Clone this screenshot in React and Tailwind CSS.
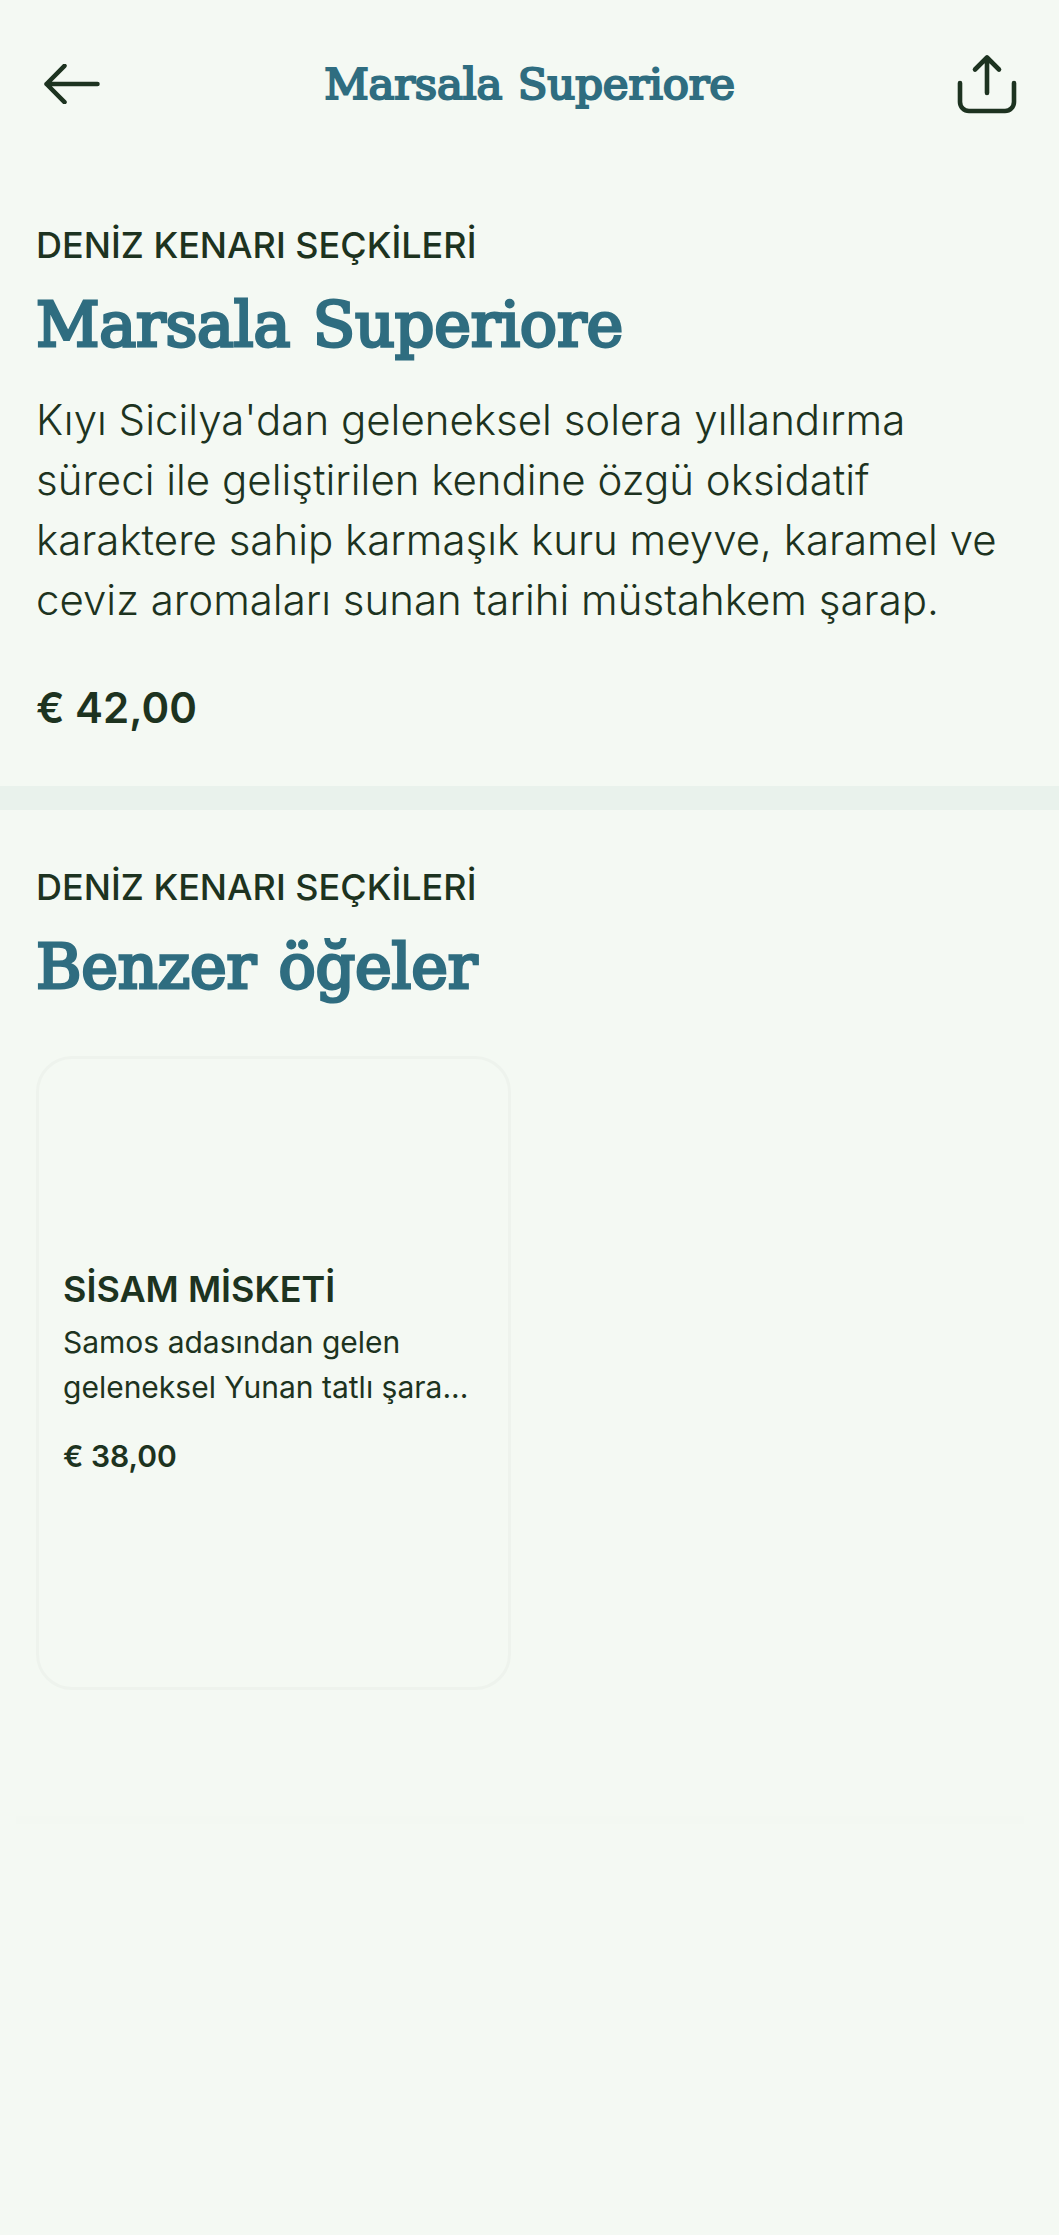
const product = {
  category: 'DENİZ KENARI SEÇKİLERİ',
  name: 'Marsala Superiore',
  description:
    "Kıyı Sicilya'dan geleneksel solera yıllandırma süreci ile geliştirilen kendine özgü oksidatif karaktere sahip karmaşık kuru meyve, karamel ve ceviz aromaları sunan tarihi müstahkem şarap.",
  price: '€ 42,00',
};

const similarItems = [
  {
    name: 'SİSAM MİSKETİ',
    lines: ['Samos adasından gelen', 'geleneksel Yunan tatlı şara...'],
    price: '€ 38,00',
  },
];

function BackIcon() {
  return (
    <svg width="58" height="40" viewBox="0 0 58 40" fill="none" stroke="currentColor" strokeWidth="4.5" strokeLinecap="round" strokeLinejoin="round">
      <path d="M55.5 20H4.5M22.5 1.8L4.5 20l18 18.2" />
    </svg>
  );
}

function ShareIcon() {
  return (
    <svg width="60" height="60" viewBox="0 0 60 60" fill="none" stroke="currentColor" strokeWidth="4.6" strokeLinecap="round" strokeLinejoin="round">
      <path d="M30 39V4M18 15.5L30 3.5l12 12" />
      <path d="M3 29v19a9 9 0 0 0 9 9h36a9 9 0 0 0 9-9V29" />
    </svg>
  );
}

function SectionHeading({ category, title }) {
  return (
    <div>
      <p className="text-[36px] leading-[44px] font-medium whitespace-nowrap">{category}</p>
      <h2 className="mt-[21px] h-[72px] w-max text-[62px] leading-[74px] font-normal tracking-[-0.2px] [word-spacing:3px] whitespace-nowrap text-[#2f6d80] font-['DejaVu_Serif',serif] [-webkit-text-stroke:3px_#2f6d80]">
        {title}
      </h2>
    </div>
  );
}

function ItemCard({ item }) {
  return (
    <article className="h-[634px] w-[475px] rounded-[36px] border-[3px] border-[#eef3ed] px-[24px] pt-[208px]">
      <h3 className="text-[36px] leading-[44px] font-semibold">{item.name}</h3>
      <div className="mt-[9px] text-[30px] leading-[45px] whitespace-nowrap">
        {item.lines.map((line) => (
          <p key={line}>{line}</p>
        ))}
      </div>
      <p className="mt-[24px] text-[30px] leading-[45px] font-semibold">{item.price}</p>
    </article>
  );
}

export default function App() {
  return (
    <div className="flex min-h-[2235px] w-[1059px] flex-col bg-[#f4f9f3] font-['Inter',sans-serif] text-[#1d3320]">
      <header className="flex h-[168px] items-center justify-between px-[42px]">
        <button className="w-[60px]" aria-label="Geri">
          <BackIcon />
        </button>
        <h1 className="w-max text-[43.5px] leading-[60px] font-normal tracking-[-0.2px] [word-spacing:2px] whitespace-nowrap text-[#2f6d80] font-['DejaVu_Serif',serif] [-webkit-text-stroke:2.2px_#2f6d80]">
          {product.name}
        </h1>
        <button className="w-[60px]" aria-label="Paylaş">
          <ShareIcon />
        </button>
      </header>

      <section className="h-[618px] px-[36px] pt-[55px]">
        <SectionHeading category={product.category} title={product.name} />
        <p className="mt-[30px] text-[42px] leading-[60px] font-light">{product.description}</p>
        <p className="mt-[48px] text-[42px] leading-[60px] font-semibold">{product.price}</p>
      </section>

      <div className="h-[24px] bg-[#e9f2ec]" />

      <section className="px-[36px] pt-[55px]">
        <SectionHeading category={product.category} title="Benzer öğeler" />
        <div className="mt-[54px] flex">
          {similarItems.map((item) => (
            <ItemCard key={item.name} item={item} />
          ))}
        </div>
      </section>

      {/* Closing divider, barely darker than the page */}
      <div className="mt-[126px] ml-[16px] h-[8px] w-[1008px] bg-[#f3f8f2]" />
    </div>
  );
}
